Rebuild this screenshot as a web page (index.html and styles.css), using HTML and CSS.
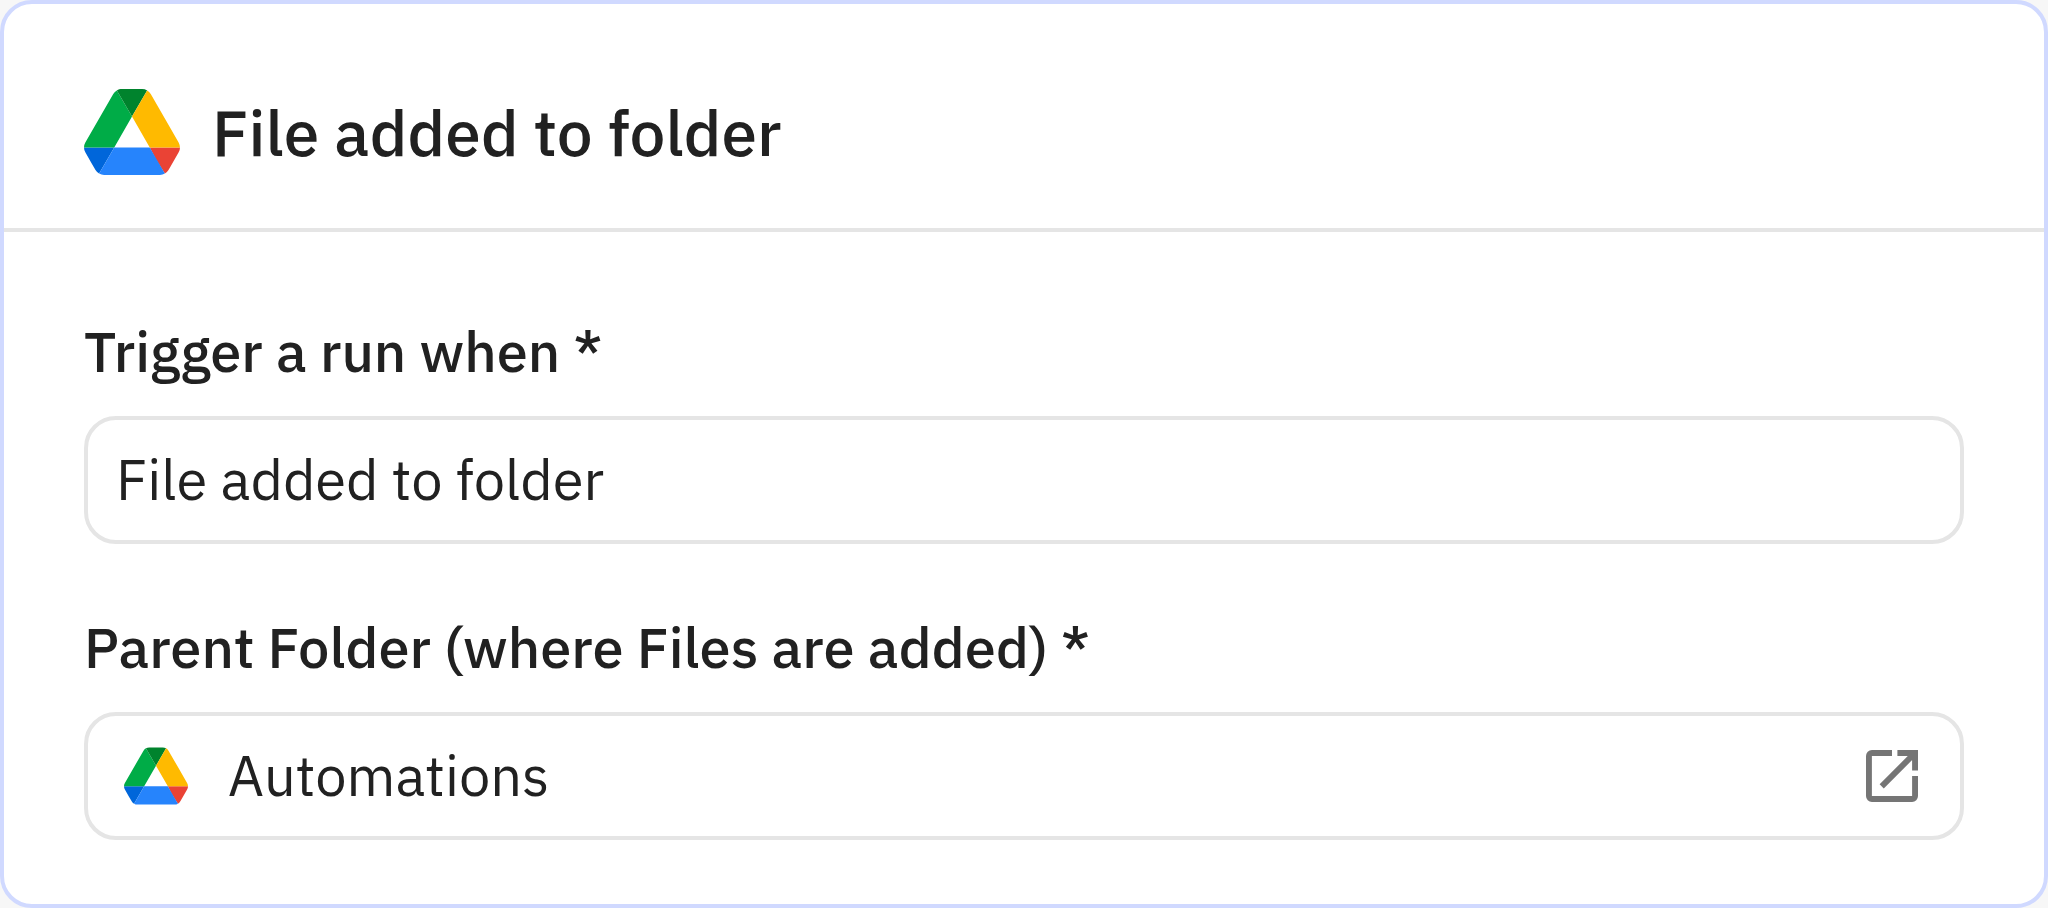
FILE: index.html
```
<!DOCTYPE html>
<html lang="en">
<head>
    <meta charset="UTF-8">
    <meta name="viewport" content="width=device-width, initial-scale=1.0">
    <title>File added to folder</title>
    <link rel="stylesheet" href="styles.css">
</head>
<body>

<!-- Drive logo, used in the header and in the folder field -->
<svg class="sprite" aria-hidden="true">
    <symbol id="drive" viewBox="0 0 87.3 78">
        <path d="m6.6 66.85 3.85 6.65c.8 1.4 1.95 2.5 3.3 3.3l13.75-23.8h-27.5c0 1.55.4 3.1 1.2 4.5z" fill="#0066da"/>
        <path d="m43.65 25-13.75-23.8c-1.35.8-2.5 1.9-3.3 3.3l-25.4 44a9.06 9.06 0 0 0 -1.2 4.5h27.5z" fill="#00ac47"/>
        <path d="m73.55 76.8c1.35-.8 2.5-1.9 3.3-3.3l1.6-2.75 7.65-13.25c.8-1.4 1.2-2.95 1.2-4.5h-27.502l5.852 11.5z" fill="#ea4335"/>
        <path d="m43.65 25 13.75-23.8c-1.35-.8-2.9-1.2-4.5-1.2h-18.5c-1.6 0-3.15.45-4.5 1.2z" fill="#00832d"/>
        <path d="m59.8 53h-32.3l-13.75 23.8c1.35.8 2.9 1.2 4.5 1.2h50.8c1.6 0 3.15-.45 4.5-1.2z" fill="#2684fc"/>
        <path d="m73.4 26.5-12.7-22c-.8-1.4-1.95-2.5-3.3-3.3l-13.75 23.8 16.15 28h27.45c0-1.55-.4-3.1-1.2-4.5z" fill="#ffba00"/>
    </symbol>
</svg>

<form class="card">
    <header class="card-header">
        <svg class="logo" aria-hidden="true"><use href="#drive"/></svg>
        <h1 class="title">File added to folder</h1>
    </header>

    <div class="card-body">
        <div class="group">
            <label class="label" for="trigger">Trigger a run when *</label>
            <div class="field">
                <input class="input" type="text" id="trigger" value="File added to folder" required>
            </div>
        </div>

        <div class="group">
            <label class="label" for="folder">Parent Folder (where Files are added) *</label>
            <div class="field">
                <span class="icon-box">
                    <svg class="logo-small" aria-hidden="true"><use href="#drive"/></svg>
                </span>
                <input class="input" type="text" id="folder" value="Automations" required>
                <button class="icon-box open-btn" type="button" aria-label="Open folder">
                    <svg class="open-icon" viewBox="0 0 53 53" aria-hidden="true">
                        <path d="M26.5 3H6a3 3 0 0 0-3 3v41a3 3 0 0 0 3 3h41a3 3 0 0 0 3-3V26.5"/>
                        <path d="M32 3h18v18M16 37 50 3"/>
                    </svg>
                </button>
            </div>
        </div>
    </div>
</form>

</body>
</html>
```
FILE: styles.css
```
* {
    box-sizing: border-box;
}
body {
    margin: 0;
    background-color: #f7f7f7;
    color: #212121;
    font-family: "IBM Plex Sans", Roboto, sans-serif;
}
.sprite {
    display: none;
}
.card {
    background-color: #ffffff;
    border: 4px solid #d0d9ff;
    border-radius: 32px;
}
.card-header {
    display: flex;
    align-items: center;
    gap: 32px;
    padding: 80px 80px 48px;
    border-bottom: 4px solid #e5e5e5;
}
.logo {
    width: 96px;
    height: 96px;
}
.title {
    margin: 0;
    font-size: 64px;
    font-weight: 500;
    line-height: 80px;
}
.card-body {
    display: flex;
    flex-direction: column;
    gap: 64px;
    padding: 80px 80px 64px;
}
.group {
    display: flex;
    flex-direction: column;
    gap: 26px;
}
.label {
    font-size: 56px;
    font-weight: 500;
    line-height: 78px;
}
.field {
    display: flex;
    align-items: center;
    gap: 32px;
    padding: 20px 28px;
    border: 4px solid #e5e5e5;
    border-radius: 32px;
}
.input {
    flex: 1;
    min-width: 0;
    height: 80px;
    padding: 0 0 2px;
    border: none;
    outline: none;
    background: none;
    color: inherit;
    font-family: inherit;
    font-size: 56px;
}
.icon-box {
    display: flex;
    align-items: center;
    justify-content: center;
    width: 80px;
    height: 80px;
}
.logo-small {
    width: 64px;
    height: 64px;
}
.open-btn {
    padding: 0;
    border: none;
    background: none;
    cursor: pointer;
}
.open-icon {
    width: 52px;
    height: 52px;
    fill: none;
    stroke: #757575;
    stroke-width: 6;
}
```
